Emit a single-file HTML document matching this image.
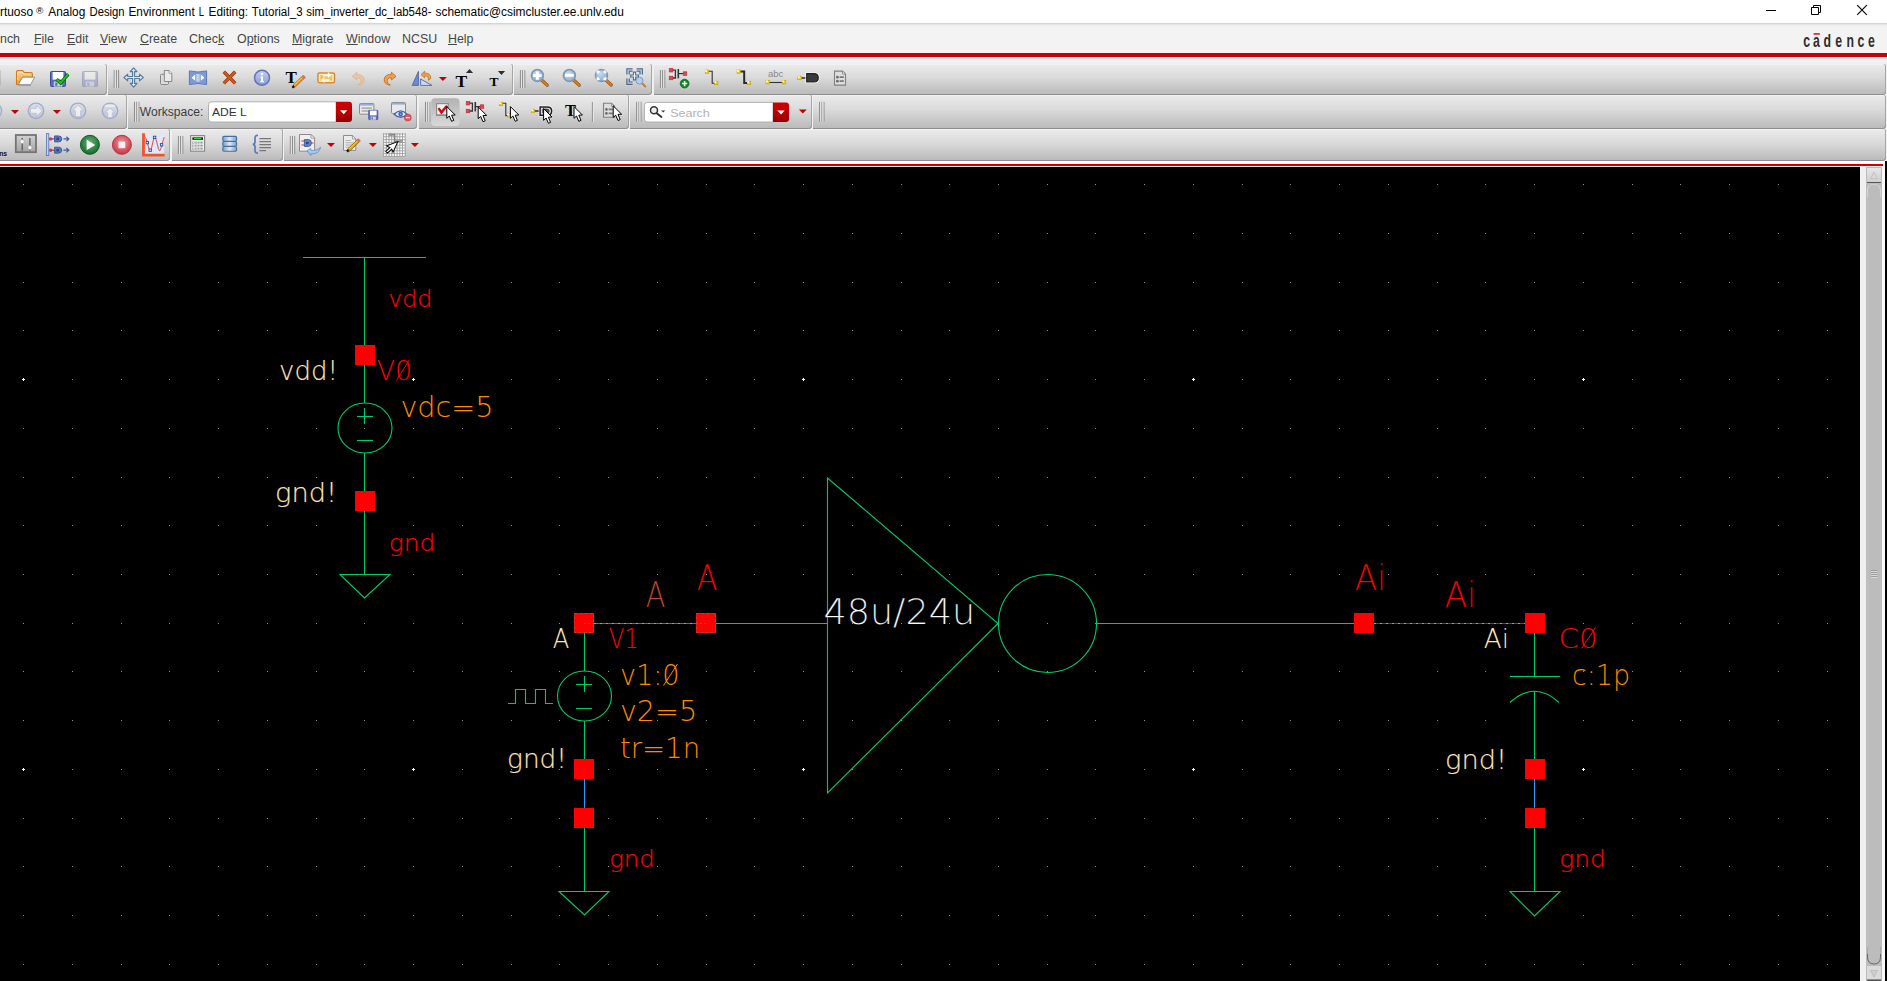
<!DOCTYPE html><html><head><meta charset="utf-8"><title>Virtuoso Analog Design Environment L Editing</title><style>
html,body{margin:0;padding:0}
body{width:1887px;height:981px;overflow:hidden;background:#f0f0f0;position:relative;font-family:"Liberation Sans",sans-serif;}
.abs{position:absolute}
#title{left:0;top:0;width:1887px;height:23px;background:#fff}
#menu{left:0;top:23px;width:1887px;height:30px;background:linear-gradient(#cdcdcd 0,#ececec 2px,#f3f3f3 4px,#f3f3f3 100%)}
#menu span{position:absolute;top:9px;font-size:12.4px;color:#464646;white-space:nowrap}
#menu u{text-decoration:underline;text-underline-offset:1px}
.red{background:#cc0000}
.tb{position:absolute;background:linear-gradient(#ebebeb,#dcdcdc 40%,#b9b9b9);border-radius:0 2px 4px 0;box-shadow:inset 0 -1px 0 #8e8e8e, inset -1px 0 0 #a6a6a6, inset 0 1px 0 #f2f2f2}
</style></head><body>
<div id="title" class="abs"></div>
<svg class="abs" style="left:0;top:0" width="700" height="23" font-family="'Liberation Sans',sans-serif" fill="#000">
<text x="0" y="16" font-size="12" textLength="33" lengthAdjust="spacingAndGlyphs">rtuoso</text>
<text x="36" y="14" font-size="9.5" textLength="7.4" lengthAdjust="spacingAndGlyphs">®</text>
<text x="48.3" y="16" font-size="12" textLength="37" lengthAdjust="spacingAndGlyphs">Analog</text>
<text x="89.5" y="16" font-size="12" textLength="35.1" lengthAdjust="spacingAndGlyphs">Design</text>
<text x="128.5" y="16" font-size="12" textLength="66.2" lengthAdjust="spacingAndGlyphs">Environment</text>
<text x="198.7" y="16" font-size="12" textLength="5.3" lengthAdjust="spacingAndGlyphs">L</text>
<text x="208.6" y="16" font-size="12" textLength="39.4" lengthAdjust="spacingAndGlyphs">Editing:</text>
<text x="251.8" y="16" font-size="12" textLength="50.9" lengthAdjust="spacingAndGlyphs">Tutorial_3</text>
<text x="306.3" y="16" font-size="12" textLength="125.2" lengthAdjust="spacingAndGlyphs">sim_inverter_dc_lab548-</text>
<text x="435.5" y="16" font-size="12" textLength="188.3" lengthAdjust="spacingAndGlyphs">schematic@csimcluster.ee.unlv.edu</text>
</svg>
<svg class="abs" style="left:1750px;top:0" width="137" height="23" viewBox="1750 0 137 23" fill="none" stroke="#000" stroke-width="1"><path d="M1766 10.5H1776"/><path d="M1811.5 7.5H1818.5V14.5H1811.5Z"/><path d="M1813.5 7.5V5.5H1820.5V12.5H1818.5"/><path d="M1857.2 5.2L1866.8 14.8M1866.8 5.2L1857.2 14.8" stroke-width="1.1"/></svg>
<div id="menu" class="abs">
<span style="left:0px">nch</span>
<span style="left:34px"><u>F</u>ile</span>
<span style="left:67px"><u>E</u>dit</span>
<span style="left:100px"><u>V</u>iew</span>
<span style="left:140px"><u>C</u>reate</span>
<span style="left:189px">Chec<u>k</u></span>
<span style="left:237px">O<u>p</u>tions</span>
<span style="left:292px"><u>M</u>igrate</span>
<span style="left:346px"><u>W</u>indow</span>
<span style="left:402px">NCSU</span>
<span style="left:448px"><u>H</u>elp</span>
</div>
<div class="abs red" style="left:0;top:53px;width:1887px;height:4px"></div>
<div class="tb" style="left:-5px;top:64px;width:111.5px;height:31px"></div>
<div class="tb" style="left:108px;top:64px;width:404.5px;height:31px"></div>
<div class="tb" style="left:514px;top:64px;width:138.3px;height:31px"></div>
<div class="tb" style="left:653.8px;top:64px;width:1232.7px;height:31px"></div>
<div class="tb" style="left:-5px;top:95px;width:131.8px;height:34px"></div>
<div class="tb" style="left:128.2px;top:95px;width:289px;height:34px"></div>
<div class="tb" style="left:418.7px;top:95px;width:209.9px;height:34px"></div>
<div class="tb" style="left:630.1px;top:95px;width:181.5px;height:34px"></div>
<div class="tb" style="left:813.1px;top:95px;width:1073.4px;height:34px"></div>
<div class="tb" style="left:-5px;top:129px;width:175.3px;height:32px"></div>
<div class="tb" style="left:171.8px;top:129px;width:111px;height:32px"></div>
<div class="tb" style="left:284.3px;top:129px;width:1602.2px;height:32px"></div>
<svg class="abs" style="left:0;top:0" width="1887" height="166" viewBox="0 0 1887 166" font-family="'Liberation Sans',sans-serif">
<defs>
<linearGradient id="gInfo" x1="0" y1="0" x2="0" y2="1"><stop offset="0" stop-color="#c3cdf0"/><stop offset="1" stop-color="#8a9dd6"/></linearGradient>
<radialGradient id="gLens" cx=".4" cy=".35" r=".7"><stop offset="0" stop-color="#c9dcf0"/><stop offset="1" stop-color="#86a9d4"/></radialGradient>
<linearGradient id="gDisc" x1="0" y1="0" x2="0" y2="1"><stop offset="0" stop-color="#dcdfea"/><stop offset="1" stop-color="#bfc5d6"/></linearGradient>
<radialGradient id="gPlay" cx=".5" cy=".4" r=".6"><stop offset="0" stop-color="#6fae7c"/><stop offset="1" stop-color="#0f6b27"/></radialGradient>
<radialGradient id="gStop" cx=".5" cy=".4" r=".6"><stop offset="0" stop-color="#ef9aa0"/><stop offset="1" stop-color="#c53442"/></radialGradient>
<linearGradient id="gDb" x1="0" y1="0" x2="1" y2="0"><stop offset="0" stop-color="#7f9cc6"/><stop offset=".5" stop-color="#dfe9f4"/><stop offset="1" stop-color="#7f9cc6"/></linearGradient>
<linearGradient id="gRedBtn" x1="0" y1="0" x2="0" y2="1"><stop offset="0" stop-color="#d00000"/><stop offset=".5" stop-color="#bb0000"/><stop offset="1" stop-color="#8e0000"/></linearGradient>
<linearGradient id="gSl" x1="0" y1="0" x2="0" y2="1"><stop offset="0" stop-color="#d2d2d2"/><stop offset="1" stop-color="#a4a4a4"/></linearGradient>
<linearGradient id="gPress" x1="0" y1="0" x2="0" y2="1"><stop offset="0" stop-color="#b2b2b2"/><stop offset="1" stop-color="#d9d9d9"/></linearGradient>
<g id="cur"><path d="M0 0V11.7L2.5 9.4L4.8 14.7L7 13.8L4.8 8.6L8.4 8.4Z" fill="#fff" stroke="#000" stroke-width="1" stroke-linejoin="miter"/></g>
<g id="dd"><path d="M-4 -2H4L0 2Z" fill="#c20000"/></g>
<g id="hd"><path d="M-2 0V18M0.2 0V18M2.4 0V18" stroke="#8b8b8b" stroke-width="1" fill="none"/><path d="M-0.9 0V18M1.3 0V18" stroke="#e6e6e6" stroke-width="1" fill="none"/></g><g id="hd2"><path d="M-2 0V20M0.2 0V20M2.4 0V20" stroke="#8b8b8b" stroke-width="1" fill="none"/><path d="M-0.9 0V20M1.3 0V20" stroke="#e6e6e6" stroke-width="1" fill="none"/></g>
<g id="ysq"><rect x="-1.8" y="-1.8" width="3.6" height="3.6" fill="#f0cf18" stroke="#b89a08" stroke-width=".5"/><rect x="-1.8" y="-1.8" width="1.9" height="1.9" fill="#fffbd0"/></g>
<g id="rsq"><rect x="-1.8" y="-1.8" width="3.6" height="3.6" fill="#dd4656" stroke="#bb2838" stroke-width=".6"/></g>
<g id="flop"><rect x=".5" y=".5" width="15" height="15" rx="1" fill="#5a6cc0" stroke="#3d4c94"/><rect x="2.6" y="1" width="10.8" height="7.6" fill="#fff"/><rect x="3.8" y="10.6" width="8.4" height="5" fill="#cdd2ec"/><rect x="5.2" y="11.6" width="2.2" height="3.2" fill="#5a6cc0"/></g>
<g id="mag"><path d="M4.2 4.4L9.8 9.6" stroke="#8a4a12" stroke-width="3.2" stroke-linecap="round"/><path d="M4.2 4.4L9.8 9.6" stroke="#e07a22" stroke-width="2" stroke-linecap="round"/><circle cx="0" cy="0" r="6" fill="url(#gLens)" stroke="#7a96b8" stroke-width="1.5"/></g>
<g id="doc"><path d="M.5 .5H8.5L11.5 3.5V14.5H.5Z" fill="#dedede" stroke="#808080" stroke-width="1.1"/><path d="M8.5 .5V3.5H11.5Z" fill="#fff" stroke="#808080" stroke-width=".8"/><circle cx="3.4" cy="6.6" r="1.35" fill="#6a6a6a"/><circle cx="3.4" cy="10.6" r="1.35" fill="#6a6a6a"/><path d="M5.6 6.6H9.8M5.6 10.6H9.8" stroke="#7a7a7a" stroke-width="1.7"/></g>
<g id="inst"><path d="M2 2H6.4V9.8H2M6.4 5.6" stroke="#333" stroke-width="1.3" fill="none"/><path d="M9.3 .8V10.2" stroke="#333" stroke-width="1.6"/><path d="M9.3 5.4H16" stroke="#333" stroke-width="1.2"/><use href="#rsq" x="2" y="2"/><use href="#rsq" x="2" y="9.8"/><use href="#rsq" x="16" y="5.4"/></g>
<g id="pinsh"><path d="M.7 .7H8Q12.3 .7 12.3 4.8Q12.3 9 8 9H.7Z" fill="#3a3a3a" stroke="#fff" stroke-width="2.6"/><path d="M.7 .7H8Q12.3 .7 12.3 4.8Q12.3 9 8 9H.7Z" fill="#3a3a3a" stroke="#222" stroke-width="1.2"/></g>
<g id="pinsh2"><path d="M.7 .7H8Q12.3 .7 12.3 4.8Q12.3 9 8 9H.7Z" fill="#e4e4e4" stroke="#fff" stroke-width="2.8"/><path d="M.7 .7H8Q12.3 .7 12.3 4.8Q12.3 9 8 9H.7Z" fill="#dcdcdc" stroke="#222" stroke-width="1.5"/><path d="M3.4 2.9H7.6Q9.8 2.9 9.8 4.8Q9.8 6.8 7.6 6.8H3.4Z" fill="#555" stroke="#333" stroke-width=".8"/></g>
<linearGradient id="gFold" x1="0" y1="0" x2="0" y2="1"><stop offset="0" stop-color="#fbd795"/><stop offset="1" stop-color="#f09a2c"/></linearGradient>
</defs>
<rect x="-1" y="70" width="1.5" height="15" fill="#8a8a8a" opacity=".6"/>
<path d="M16.5 84.5V72Q16.5 70.6 18 70.6H22.6L24.4 72.6H31Q32.4 72.6 32.4 74V77.2H22.6L18.4 84.5Z" fill="url(#gFold)" stroke="#d8781a" stroke-width="1.1"/><path d="M17.8 80V72.6Q17.8 71.9 18.6 71.9H22L23.8 73.9H30.6" fill="none" stroke="#fff3d8" stroke-width=".8" opacity=".9"/>
<path d="M18.3 84.6L22.6 77.2H34.8L30.6 84.6Z" fill="#fafafa" stroke="#8592a2" stroke-width=".9"/>
<path d="M18 85.6H31" stroke="#777" stroke-width="1" opacity=".5"/>
<use href="#flop" x="50" y="71"/>
<path d="M56.6 79.2L60.7 83L68.2 74.2" fill="none" stroke="#0a5a0a" stroke-width="3.4" stroke-linejoin="miter"/>
<path d="M56.6 79.2L60.7 83L68.2 74.2" fill="none" stroke="#14c814" stroke-width="2" stroke-linejoin="miter"/>
<use href="#flop" x="82" y="71" opacity=".33"/>
<use href="#hd" x="116.2" y="70"/>
<path d="M133.6 67.8L137 71.6H134.6V76.5H139.5V74.1L143.3 77.5L139.5 80.9V78.5H134.6V83.4H137L133.6 87.2L130.2 83.4H132.6V78.5H127.7V80.9L123.9 77.5L127.7 74.1V76.5H132.6V71.6H130.2Z" fill="#dce6f2" stroke="#527aa2" stroke-width="1.1" stroke-linejoin="round"/>
<rect x="160.5" y="74.3" width="8" height="10.2" rx="1" fill="#dcdcdc" stroke="#868686"/>
<path d="M164.3 70.5H169L171.8 73.3V81.5H164.3Z" fill="#e9e9e9" stroke="#868686"/><path d="M169 70.5V73.3H171.8" fill="#fff" stroke="#868686" stroke-width=".8"/>
<path d="M189.4 70.9Q198 73.2 206.6 70.9V84.6Q198 82.4 189.4 84.6Z" fill="#7b9ad6" stroke="#5b79b6" stroke-width="1"/>
<path d="M191.6 77.7L195.2 74.6V80.8ZM204.4 77.7L200.8 74.6V80.8Z" fill="#fff"/><rect x="196.6" y="74" width="2.8" height="7.6" fill="#fff"/><rect x="197.6" y="74" width=".9" height="7.6" fill="#7b9ad6"/>
<path d="M223.8 71.8L235.2 83.4M235.2 71.8L223.8 83.4" stroke="#8a3208" stroke-width="3.4" stroke-linecap="butt"/>
<path d="M223.8 71.8L235.2 83.4M235.2 71.8L223.8 83.4" stroke="#d2581a" stroke-width="2.2" stroke-linecap="butt"/>
<circle cx="262" cy="77.8" r="7.5" fill="url(#gInfo)" stroke="#5874b6" stroke-width="1.4"/>
<circle cx="262" cy="74.1" r="1.3" fill="#fff"/><path d="M260.4 76.6H263V81H264V82.2H260.2V81H261.1V77.8H260.4Z" fill="#fff"/>
<text x="285.5" y="83" font-family="'Liberation Serif',serif" font-weight="700" font-size="17" fill="#000">T</text>
<path d="M293.6 86.6L304.4 76.2" stroke="#7a5a10" stroke-width="3.4"/><path d="M293.6 86.6L304.4 76.2" stroke="#f6d21e" stroke-width="2.2"/><path d="M302.6 77.9L304.6 76" stroke="#e07070" stroke-width="3"/><path d="M292.4 87.7L294.3 85.9" stroke="#111" stroke-width="2.2"/><path d="M294 86.8L303.6 77.6" stroke="#e8552a" stroke-width=".7"/>
<rect x="317.9" y="72.9" width="16.6" height="9.8" rx="1.6" fill="#fdf0c8" stroke="#e08434" stroke-width="1.5"/><rect x="320.2" y="75" width="12" height="5.6" fill="#f2c254"/>
<path d="M323 74.6H328V72.2L331.4 75.2L328 78V76.2H323ZM329.4 79.2H324.4V77L321 80L324.4 83V80.8H329.4Z" fill="#fff" stroke="#f0e0b0" stroke-width=".4"/>
<path d="M356.8 72.2L352.2 76.4L356.8 80V77.8Q361.6 77.6 361 81.6Q360.6 83.8 357.8 85.2Q364.4 84.4 364 79.2Q363.4 74.4 356.8 74.4Z" fill="#eec39c" stroke="#dcae88" stroke-width=".8" opacity=".9"/>
<g transform="translate(748.2 0) scale(-1 1)"><path d="M356.8 72.2L352.2 76.4L356.8 80V77.8Q361.6 77.6 361 81.6Q360.6 83.8 357.8 85.2Q364.4 84.4 364 79.2Q363.4 74.4 356.8 74.4Z" fill="#f0a04a" stroke="#c46e1c" stroke-width=".9"/></g>
<path d="M418.4 71.4V85.4H412.2Z" fill="#6d89cb" stroke="#4d68ac" stroke-width=".9"/><path d="M420.6 79L432 85.4H420.6Z" fill="#cdd8f2" stroke="#4d68ac" stroke-width=".9"/>
<path d="M421 74.6L424.6 71.2V73.2Q430.6 72.6 430.8 78.4L428.4 80.4Q429 75.6 424.6 75.8V77.8Z" fill="#f0a04a" stroke="#c46e1c" stroke-width=".8"/>
<use href="#dd" x="442.9" y="78.9"/>
<text x="455.4" y="87" font-family="'Liberation Serif',serif" font-weight="700" font-size="17.5" fill="#000">T</text><path d="M465.9 73H473.1L469.5 68.9Z" fill="#2e2e2e"/>
<text x="489.6" y="85.9" font-family="'Liberation Serif',serif" font-weight="700" font-size="13.5" fill="#000">T</text><path d="M497.9 71H505.1L501.5 75.1Z" fill="#2e2e2e"/>
<use href="#hd" x="522.4" y="70"/>
<use href="#mag" x="537.4" y="75.6"/><path d="M533.2 75.6H541.6M537.4 71.4V79.8" stroke="#fff" stroke-width="2.9"/>
<use href="#mag" x="569.4" y="75.6"/><path d="M565 75.3H573.8" stroke="#fff" stroke-width="3"/>
<use href="#mag" x="601.5" y="75.4"/><path d="M597.6 73.6V71.6H599.6M603.4 71.6H605.4V73.6M605.4 77.2V79.2H603.4M599.6 79.2H597.6V77.2" stroke="#fff" stroke-width="2" fill="#fff"/>
<path d="M626.9 74.4V68.8H632.6M636.6 68.8H642.3V74.4M626.9 78.6V84.3H632.6" stroke="#44688f" stroke-width="1.2" fill="none"/>
<path d="M629.2 74.4V71.1H632.6M636.6 71.1H640V74.4M629.2 78.6V82H632.6" stroke="#44688f" stroke-width="1.2" fill="none"/>
<path d="M634.5 71.6V80.4M630.1 76H638.9" stroke="#44688f" stroke-width="3.2"/><path d="M634.5 72.7V79.3M631.2 76H637.8" stroke="#f2f6fb" stroke-width="1.2"/>
<path d="M641.8 83L645.4 86.6" stroke="#d2741e" stroke-width="1.8" stroke-linecap="round"/><circle cx="639.5" cy="80.7" r="3.5" fill="#b5cdea" stroke="#7a9cc6" stroke-width="1"/>
<use href="#hd" x="662.4" y="70"/>
<use href="#inst" x="669" y="68.2"/>
<circle cx="684.6" cy="83.6" r="4.4" fill="#0c8a1c" stroke="#0a6a14" stroke-width=".8"/><path d="M682 83.6H687.2M684.6 81V86.2" stroke="#fff" stroke-width="1.5"/>
<path d="M708 71.2H712.2V83.2H715.6" stroke="#333" stroke-width="1.1" fill="none"/><use href="#ysq" x="707" y="71.8"/><use href="#ysq" x="716.2" y="83"/>
<path d="M740 71.6H744.2V83.1H747.6" stroke="#2a2a2a" stroke-width="2" fill="none"/><use href="#ysq" x="738.8" y="71.8"/><use href="#ysq" x="749" y="83"/>
<text x="768" y="76.6" font-size="8.6" fill="#8a8a8a" font-family="'Liberation Sans',sans-serif" textLength="15.4" lengthAdjust="spacingAndGlyphs">abc</text>
<path d="M768 82.5H784" stroke="#333" stroke-width="1.1"/><use href="#ysq" x="767.8" y="82.2"/><use href="#ysq" x="784" y="82.2"/>
<path d="M800 78H806.4" stroke="#222" stroke-width="1.4"/><use href="#pinsh" x="806" y="73"/><use href="#ysq" x="799.6" y="78"/>
<use href="#doc" x="834" y="70.6"/>
<circle cx="-6" cy="110.8" r="7.6" fill="url(#gDisc)" stroke="#a3aecb" stroke-width="1.4"/>
<use href="#dd" x="15" y="112"/>
<circle cx="36" cy="110.8" r="7.7" fill="url(#gDisc)" stroke="#a0acca" stroke-width="1.4"/>
<path d="M30.4 108.3H36.4V105.3L42.2 110.8L36.4 116.3V113.3H30.4Z" fill="#eeeeee" stroke="#b4bbcf" stroke-width=".7"/>
<use href="#dd" x="56.9" y="112"/>
<circle cx="78" cy="110.8" r="7.7" fill="url(#gDisc)" stroke="#a0acca" stroke-width="1.4"/>
<path d="M75.4 116.6V110.8H72.6L78 104.8L83.4 110.8H80.6V116.6Z" fill="#eeeeee" stroke="#b4bbcf" stroke-width=".7"/>
<circle cx="110" cy="110.8" r="7.7" fill="url(#gDisc)" stroke="#a0acca" stroke-width="1.4"/>
<path d="M104.8 105.8H115.2" stroke="#ebebeb" stroke-width="2"/>
<path d="M107.7 117.4V112.8H105.2L110 108L114.8 112.8H112.3V117.4Z" fill="#eeeeee" stroke="#b4bbcf" stroke-width=".7"/>
<use href="#hd2" x="136.5" y="101.8"/>
<text x="139.8" y="116" font-size="12" fill="#3c3c3c" textLength="63.6" lengthAdjust="spacingAndGlyphs">Workspace:</text>
<path d="M211.5 101.8H336V122H211.5Q208.5 122 208.5 119V104.8Q208.5 101.8 211.5 101.8Z" fill="#fff" stroke="#a9a9a9" stroke-width=".9"/>
<path d="M336 101.8H349Q352 101.8 352 104.8V119Q352 122 349 122H336Z" fill="url(#gRedBtn)"/>
<path d="M340 110.2H347.4L343.7 114.2Z" fill="#fff"/>
<text x="212" y="116" font-size="11.8" fill="#333" textLength="34.8" lengthAdjust="spacingAndGlyphs">ADE L</text>
<rect x="359.5" y="103.6" width="14.4" height="10.6" rx=".8" fill="#e9e9e9" stroke="#8a8a8a"/><rect x="360" y="104" width="13.4" height="1.6" fill="#8fb0dc"/><path d="M361.6 108.1H371.8M361.6 111H371.8" stroke="#7a7a7a" stroke-width=".9"/>
<g transform="translate(368.3 110) scale(.62)"><use href="#flop"/></g>
<rect x="391.5" y="102.6" width="14" height="10.8" rx=".8" fill="#e9e9e9" stroke="#8a8a8a"/><rect x="392" y="103" width="13" height="1.6" fill="#8fb0dc"/>
<path d="M394.2 114.2Q400.6 107.6 407 114.2Q400.6 120.4 394.2 114.2Z" fill="#e8eefa" stroke="#3f62b0" stroke-width="1.4"/><circle cx="400.6" cy="114.1" r="2.4" fill="#3f62b0"/><circle cx="400.6" cy="114.1" r=".9" fill="#9fb4e0"/>
<circle cx="407.8" cy="117.6" r="3.5" fill="#e05560" stroke="#c83848" stroke-width=".6"/><path d="M405.8 117.6H409.8" stroke="#fff" stroke-width="1.3"/>
<use href="#hd2" x="427.5" y="101.8"/>
<rect x="431.2" y="98.2" width="28.4" height="27.8" rx="4" fill="url(#gPress)"/>
<rect x="436.6" y="103.6" width="11.6" height="11.6" fill="#f0f0f0" stroke="#8c8c8c" stroke-width="1.2"/><path d="M436 115.2H448.8" stroke="#8c8c8c" stroke-width="1.6"/>
<path d="M438.6 108.2L441.4 112.4L447 105.8" fill="none" stroke="#e00010" stroke-width="2.4"/>
<use href="#cur" x="446.8" y="106.6"/>
<use href="#inst" x="466" y="101.2"/><use href="#cur" x="478.2" y="107"/>
<path d="M502 103.2H505.8V115.6H508.6" stroke="#333" stroke-width="1.1" fill="none"/><use href="#ysq" x="501" y="104"/><use href="#ysq" x="509" y="115.2"/><use href="#cur" x="510.4" y="106.6"/>
<path d="M533.4 111H539.6" stroke="#222" stroke-width="1.4"/><use href="#pinsh2" x="539.4" y="106.2"/><use href="#ysq" x="533" y="111"/><use href="#cur" x="543.6" y="108.6"/>
<text x="565" y="116" font-family="'Liberation Serif',serif" font-weight="700" font-size="16.5" fill="#000">T</text><use href="#cur" x="574" y="106.6"/>
<path d="M592.4 102V122" stroke="#8b8b8b" stroke-width="1"/><path d="M593.4 102V122" stroke="#e6e6e6" stroke-width="1"/>
<use href="#doc" x="603" y="102.8"/><use href="#cur" x="613.2" y="105.8"/>
<use href="#hd2" x="638.6" y="101.8"/>
<path d="M647.4 102.4H773V122H647.4Q644.4 122 644.4 119V105.4Q644.4 102.4 647.4 102.4Z" fill="#fff" stroke="#a9a9a9" stroke-width=".9"/>
<path d="M773 102.4H786Q789 102.4 789 105.4V119Q789 122 786 122H773Z" fill="url(#gRedBtn)"/><path d="M777.3 110.4H784.7L781 114.4Z" fill="#fff"/>
<circle cx="654" cy="110.3" r="3.5" fill="#eee" stroke="#333" stroke-width="1.5"/><path d="M656.8 113.2L661.4 117" stroke="#333" stroke-width="1.9" stroke-linecap="round"/><path d="M661.2 110.4H665.2L663.2 112.6Z" fill="#333"/>
<text x="670.2" y="116.6" font-size="11.6" fill="#b2b2b2" textLength="39.6" lengthAdjust="spacingAndGlyphs">Search</text>
<use href="#dd" x="802.8" y="111.4"/>
<use href="#hd2" x="821.6" y="101.8"/>
<text x="-5" y="155.7" font-size="6.8" font-weight="700" fill="#111">ons</text>
<rect x="15.8" y="135" width="20.2" height="17.2" fill="url(#gSl)" stroke="#747474" stroke-width="1.8"/>
<path d="M22.2 138V150.6M29.9 138V150.6" stroke="#4a4a4a" stroke-width="1.1"/><circle cx="22.2" cy="141.6" r="2.1" fill="#f4f4f4" stroke="#999" stroke-width=".5"/><circle cx="29.9" cy="147.6" r="2.1" fill="#f4f4f4" stroke="#999" stroke-width=".5"/>
<rect x="46.4" y="133.6" width="2.4" height="22" fill="#c6d2ee" stroke="#5672b4" stroke-width=".8"/>
<path d="M50 138.9 H56" stroke="#4a5e98" stroke-width="1.2"/><circle cx="50.6" cy="138.9" r="1.7" fill="#e23048"/>
<path d="M54.6 135.9 H58.4Q61.8 135.9 61.8 138.9 Q61.8 141.9 58.4 141.9 H54.6Z" fill="#5f78b8" stroke="#3f5490" stroke-width=".9"/>
<rect x="56.4" y="137.7" width="2.6" height="2.4" fill="#2f4484"/>
<path d="M63.4 138.9 H68.2M66.4 136.7 L68.8 138.9 L66.4 141.1" stroke="#3f5ca0" stroke-width="1.2" fill="none"/>
<path d="M50 150.2 H56" stroke="#4a5e98" stroke-width="1.2"/><circle cx="50.6" cy="150.2" r="1.7" fill="#e23048"/>
<path d="M54.6 147.2 H58.4Q61.8 147.2 61.8 150.2 Q61.8 153.2 58.4 153.2 H54.6Z" fill="#5f78b8" stroke="#3f5490" stroke-width=".9"/>
<rect x="56.4" y="149" width="2.6" height="2.4" fill="#2f4484"/>
<path d="M63.4 150.2 H68.2M66.4 148 L68.8 150.2 L66.4 152.4" stroke="#3f5ca0" stroke-width="1.2" fill="none"/>
<circle cx="89.9" cy="144.8" r="9.5" fill="url(#gPlay)" stroke="#0b5e20" stroke-width="1"/><path d="M86.6 139.6L95.2 144.9L86.6 150.2Z" fill="#f2f8f2"/>
<circle cx="121.9" cy="144.8" r="9.5" fill="url(#gStop)" stroke="#c03040" stroke-width="1"/><rect x="118.5" y="141.6" width="6.8" height="6.6" fill="#fbeeee"/>
<rect x="143.6" y="134.6" width="20.6" height="19.6" fill="#e0e7f6"/><path d="M143.5 133.2V155.2H164.6" stroke="#f0532e" stroke-width="2.8" fill="none"/>
<path d="M145.2 137.4C147.4 139 148.4 150.4 150.2 150.4S153 137.2 154.8 137.2S157.8 150.6 159.6 150.6S162.4 140 164.4 137.2" stroke="#e05858" stroke-width="1.1" fill="none"/>
<rect x="146.1" y="141.4" width="2.4" height="2.4" fill="#dfe6f6" stroke="#2c4a94" stroke-width=".9"/>
<rect x="149" y="149" width="2.4" height="2.4" fill="#dfe6f6" stroke="#2c4a94" stroke-width=".9"/>
<rect x="153.4" y="136.2" width="2.4" height="2.4" fill="#dfe6f6" stroke="#2c4a94" stroke-width=".9"/>
<rect x="160.4" y="143.6" width="2.4" height="2.4" fill="#dfe6f6" stroke="#2c4a94" stroke-width=".9"/>
<use href="#hd" x="180.4" y="136"/>
<rect x="190.6" y="135.6" width="14" height="15.6" fill="#ececec" stroke="#868686" stroke-width="1.1"/><rect x="192.4" y="137.4" width="10.6" height="2.4" fill="#111"/><rect x="194" y="138" width="7.4" height="1.1" fill="#38d838"/>
<rect x="192.5" y="142" width="1.7" height="1.6" fill="#fff" stroke="#8a8a8a" stroke-width=".5"/>
<rect x="195.25" y="142" width="1.7" height="1.6" fill="#fff" stroke="#8a8a8a" stroke-width=".5"/>
<rect x="198" y="142" width="1.7" height="1.6" fill="#fff" stroke="#8a8a8a" stroke-width=".5"/>
<rect x="200.75" y="142" width="1.7" height="1.6" fill="#fff" stroke="#8a8a8a" stroke-width=".5"/>
<rect x="192.5" y="145" width="1.7" height="1.6" fill="#fff" stroke="#8a8a8a" stroke-width=".5"/>
<rect x="195.25" y="145" width="1.7" height="1.6" fill="#fff" stroke="#8a8a8a" stroke-width=".5"/>
<rect x="198" y="145" width="1.7" height="1.6" fill="#fff" stroke="#8a8a8a" stroke-width=".5"/>
<rect x="200.75" y="145" width="1.7" height="1.6" fill="#fff" stroke="#8a8a8a" stroke-width=".5"/>
<rect x="192.5" y="148" width="1.7" height="1.6" fill="#fff" stroke="#8a8a8a" stroke-width=".5"/>
<rect x="195.25" y="148" width="1.7" height="1.6" fill="#fff" stroke="#8a8a8a" stroke-width=".5"/>
<rect x="198" y="148" width="1.7" height="1.6" fill="#fff" stroke="#8a8a8a" stroke-width=".5"/>
<rect x="200.75" y="148" width="1.7" height="1.6" fill="#fff" stroke="#8a8a8a" stroke-width=".5"/>
<rect x="222.8" y="136.4" width="13.8" height="4.8" rx="1.2" fill="url(#gDb)" stroke="#45709f" stroke-width="1.1"/>
<rect x="222.8" y="141.45" width="13.8" height="4.8" rx="1.2" fill="url(#gDb)" stroke="#45709f" stroke-width="1.1"/>
<rect x="222.8" y="146.5" width="13.8" height="4.8" rx="1.2" fill="url(#gDb)" stroke="#45709f" stroke-width="1.1"/>
<path d="M258 135.4Q255 135.2 255 138V142Q255 144.2 252.8 144.3Q255 144.4 255 146.6V150.6Q255 153.4 258 153.2" stroke="#5878c4" stroke-width="1.7" fill="none"/>
<path d="M259.4 138.6H271M259.4 141.6H271M259.4 144.6H271M259.4 147.6H271M259.4 150.6H266" stroke="#777" stroke-width="1.3"/>
<use href="#hd" x="292.3" y="136"/>
<path d="M299.5 134.5H311L314.6 138.1V151.2H299.5Z" fill="#efefef" stroke="#8c8c8c"/><path d="M311 134.5V138.1H314.6Z" fill="#fff" stroke="#8c8c8c" stroke-width=".8"/>
<path d="M301.4 141H305M301.4 145H305M311 143H313.6" stroke="#e03040" stroke-width="1.2"/><path d="M304.4 139.6H308.4Q311.4 139.6 311.4 143Q311.4 146.4 308.4 146.4H304.4Z" fill="#6a84c4" stroke="#3f5896" stroke-width=".9"/><rect x="306" y="141.8" width="2.6" height="2.4" fill="#2f4484"/>
<path d="M307 150.8L310.8 148.4V150.2Q317 151.2 320.6 147.2Q319 154.6 310.8 153.8V155.4Z" fill="#a8c8ec" stroke="#5a8ccc" stroke-width=".8"/>
<use href="#dd" x="331" y="144.9"/>
<path d="M343.5 135.5H352.4L355.8 138.9V150.4H343.5Z" fill="#ececec" stroke="#8c8c8c"/><path d="M352.4 135.5V138.9H355.8Z" fill="#fff" stroke="#8c8c8c" stroke-width=".8"/><path d="M345.6 140.6H351M345.6 142.8H353.6M345.6 145H353.6M345.6 147.2H352" stroke="#a0a0a0" stroke-width=".8"/>
<path d="M348.2 150.4L359.4 139.8" stroke="#7a5a10" stroke-width="3.4"/><path d="M348.2 150.4L359.4 139.8" stroke="#f6d21e" stroke-width="2.2"/><path d="M357.8 141.4L359.6 139.6" stroke="#e07070" stroke-width="3"/><path d="M347 151.6L348.8 149.8" stroke="#111" stroke-width="2.2"/><path d="M348.6 150.6L358.6 141.2" stroke="#e8552a" stroke-width=".7"/>
<use href="#dd" x="372.9" y="144.9"/>
<rect x="383" y="133.2" width="21.8" height="23.2" fill="#fff"/>
<path d="M383.6 133.2V156.4M386.3 133.2V156.4M389 133.2V156.4M391.7 133.2V156.4M394.4 133.2V156.4M397.1 133.2V156.4M399.8 133.2V156.4M402.5 133.2V156.4M405.2 133.2V156.4M383 134H404.8M383 136.8H404.8M383 139.6H404.8M383 142.4H404.8M383 145.2H404.8M383 148H404.8M383 150.8H404.8M383 153.6H404.8M383 156.4H404.8" stroke="#9c9c9c" stroke-width=".9" fill="none"/>
<path d="M389.6 134.6H394.6V141.4H402" stroke="#808080" stroke-width="1.6" fill="none"/><rect x="388.4" y="133.4" width="2.6" height="2.6" fill="#999"/><rect x="400" y="140" width="2.8" height="2.8" fill="#999"/>
<g transform="translate(397.8 141.6) rotate(24) scale(-1 1)"><use href="#cur"/></g>
<use href="#dd" x="414.9" y="144.9"/>
</svg>
<div class="abs" style="left:0;top:161px;width:1885px;height:3px;background:#fff"></div>
<div class="abs" style="left:1885px;top:161px;width:2px;height:820px;background:#000"></div>
<div class="abs" style="left:1882px;top:164px;width:3px;height:817px;background:#fafafa"></div>
<div class="abs red" style="left:0;top:164px;width:1883px;height:2px"></div>
<svg class="abs" style="left:0;top:0" width="1860" height="981" viewBox="0 0 1860 981"><rect x="0" y="167" width="1860" height="814" fill="#000"/>
<path d="M23 184.5h1M23 233.5h1M23 282.5h1M23 330.5h1M23 428.5h1M23 477.5h1M23 525.5h1M23 574.5h1M23 623.5h1M23 671.5h1M23 720.5h1M23 818.5h1M23 866.5h1M23 915.5h1M23 964.5h1M72 184.5h1M72 233.5h1M72 282.5h1M72 330.5h1M72 379.5h1M72 428.5h1M72 477.5h1M72 525.5h1M72 574.5h1M72 623.5h1M72 671.5h1M72 720.5h1M72 769.5h1M72 818.5h1M72 866.5h1M72 915.5h1M72 964.5h1M121 184.5h1M121 233.5h1M121 282.5h1M121 330.5h1M121 379.5h1M121 428.5h1M121 477.5h1M121 525.5h1M121 574.5h1M121 623.5h1M121 671.5h1M121 720.5h1M121 769.5h1M121 818.5h1M121 866.5h1M121 915.5h1M121 964.5h1M169 184.5h1M169 233.5h1M169 282.5h1M169 330.5h1M169 379.5h1M169 428.5h1M169 477.5h1M169 525.5h1M169 574.5h1M169 623.5h1M169 671.5h1M169 720.5h1M169 769.5h1M169 818.5h1M169 866.5h1M169 915.5h1M169 964.5h1M218 184.5h1M218 233.5h1M218 282.5h1M218 330.5h1M218 379.5h1M218 428.5h1M218 477.5h1M218 525.5h1M218 574.5h1M218 623.5h1M218 671.5h1M218 720.5h1M218 769.5h1M218 818.5h1M218 866.5h1M218 915.5h1M218 964.5h1M267 184.5h1M267 233.5h1M267 282.5h1M267 330.5h1M267 379.5h1M267 428.5h1M267 477.5h1M267 525.5h1M267 574.5h1M267 623.5h1M267 671.5h1M267 720.5h1M267 769.5h1M267 818.5h1M267 866.5h1M267 915.5h1M267 964.5h1M316 184.5h1M316 233.5h1M316 282.5h1M316 330.5h1M316 379.5h1M316 428.5h1M316 477.5h1M316 525.5h1M316 574.5h1M316 623.5h1M316 671.5h1M316 720.5h1M316 769.5h1M316 818.5h1M316 866.5h1M316 915.5h1M316 964.5h1M364 184.5h1M364 233.5h1M364 282.5h1M364 330.5h1M364 379.5h1M364 428.5h1M364 477.5h1M364 525.5h1M364 574.5h1M364 623.5h1M364 671.5h1M364 720.5h1M364 769.5h1M364 818.5h1M364 866.5h1M364 915.5h1M364 964.5h1M413 184.5h1M413 233.5h1M413 282.5h1M413 330.5h1M413 428.5h1M413 477.5h1M413 525.5h1M413 574.5h1M413 623.5h1M413 671.5h1M413 720.5h1M413 818.5h1M413 866.5h1M413 915.5h1M413 964.5h1M462 184.5h1M462 233.5h1M462 282.5h1M462 330.5h1M462 379.5h1M462 428.5h1M462 477.5h1M462 525.5h1M462 574.5h1M462 623.5h1M462 671.5h1M462 720.5h1M462 769.5h1M462 818.5h1M462 866.5h1M462 915.5h1M462 964.5h1M511 184.5h1M511 233.5h1M511 282.5h1M511 330.5h1M511 379.5h1M511 428.5h1M511 477.5h1M511 525.5h1M511 574.5h1M511 623.5h1M511 671.5h1M511 720.5h1M511 769.5h1M511 818.5h1M511 866.5h1M511 915.5h1M511 964.5h1M559 184.5h1M559 233.5h1M559 282.5h1M559 330.5h1M559 379.5h1M559 428.5h1M559 477.5h1M559 525.5h1M559 574.5h1M559 623.5h1M559 671.5h1M559 720.5h1M559 769.5h1M559 818.5h1M559 866.5h1M559 915.5h1M559 964.5h1M608 184.5h1M608 233.5h1M608 282.5h1M608 330.5h1M608 379.5h1M608 428.5h1M608 477.5h1M608 525.5h1M608 574.5h1M608 623.5h1M608 671.5h1M608 720.5h1M608 769.5h1M608 818.5h1M608 866.5h1M608 915.5h1M608 964.5h1M657 184.5h1M657 233.5h1M657 282.5h1M657 330.5h1M657 379.5h1M657 428.5h1M657 477.5h1M657 525.5h1M657 574.5h1M657 623.5h1M657 671.5h1M657 720.5h1M657 769.5h1M657 818.5h1M657 866.5h1M657 915.5h1M657 964.5h1M706 184.5h1M706 233.5h1M706 282.5h1M706 330.5h1M706 379.5h1M706 428.5h1M706 477.5h1M706 525.5h1M706 574.5h1M706 623.5h1M706 671.5h1M706 720.5h1M706 769.5h1M706 818.5h1M706 866.5h1M706 915.5h1M706 964.5h1M754 184.5h1M754 233.5h1M754 282.5h1M754 330.5h1M754 379.5h1M754 428.5h1M754 477.5h1M754 525.5h1M754 574.5h1M754 623.5h1M754 671.5h1M754 720.5h1M754 769.5h1M754 818.5h1M754 866.5h1M754 915.5h1M754 964.5h1M803 184.5h1M803 233.5h1M803 282.5h1M803 330.5h1M803 428.5h1M803 477.5h1M803 525.5h1M803 574.5h1M803 623.5h1M803 671.5h1M803 720.5h1M803 818.5h1M803 866.5h1M803 915.5h1M803 964.5h1M852 184.5h1M852 233.5h1M852 282.5h1M852 330.5h1M852 379.5h1M852 428.5h1M852 477.5h1M852 525.5h1M852 574.5h1M852 623.5h1M852 671.5h1M852 720.5h1M852 769.5h1M852 818.5h1M852 866.5h1M852 915.5h1M852 964.5h1M901 184.5h1M901 233.5h1M901 282.5h1M901 330.5h1M901 379.5h1M901 428.5h1M901 477.5h1M901 525.5h1M901 574.5h1M901 623.5h1M901 671.5h1M901 720.5h1M901 769.5h1M901 818.5h1M901 866.5h1M901 915.5h1M901 964.5h1M949 184.5h1M949 233.5h1M949 282.5h1M949 330.5h1M949 379.5h1M949 428.5h1M949 477.5h1M949 525.5h1M949 574.5h1M949 623.5h1M949 671.5h1M949 720.5h1M949 769.5h1M949 818.5h1M949 866.5h1M949 915.5h1M949 964.5h1M998 184.5h1M998 233.5h1M998 282.5h1M998 330.5h1M998 379.5h1M998 428.5h1M998 477.5h1M998 525.5h1M998 574.5h1M998 623.5h1M998 671.5h1M998 720.5h1M998 769.5h1M998 818.5h1M998 866.5h1M998 915.5h1M998 964.5h1M1047 184.5h1M1047 233.5h1M1047 282.5h1M1047 330.5h1M1047 379.5h1M1047 428.5h1M1047 477.5h1M1047 525.5h1M1047 574.5h1M1047 623.5h1M1047 671.5h1M1047 720.5h1M1047 769.5h1M1047 818.5h1M1047 866.5h1M1047 915.5h1M1047 964.5h1M1095 184.5h1M1095 233.5h1M1095 282.5h1M1095 330.5h1M1095 379.5h1M1095 428.5h1M1095 477.5h1M1095 525.5h1M1095 574.5h1M1095 623.5h1M1095 671.5h1M1095 720.5h1M1095 769.5h1M1095 818.5h1M1095 866.5h1M1095 915.5h1M1095 964.5h1M1144 184.5h1M1144 233.5h1M1144 282.5h1M1144 330.5h1M1144 379.5h1M1144 428.5h1M1144 477.5h1M1144 525.5h1M1144 574.5h1M1144 623.5h1M1144 671.5h1M1144 720.5h1M1144 769.5h1M1144 818.5h1M1144 866.5h1M1144 915.5h1M1144 964.5h1M1193 184.5h1M1193 233.5h1M1193 282.5h1M1193 330.5h1M1193 428.5h1M1193 477.5h1M1193 525.5h1M1193 574.5h1M1193 623.5h1M1193 671.5h1M1193 720.5h1M1193 818.5h1M1193 866.5h1M1193 915.5h1M1193 964.5h1M1242 184.5h1M1242 233.5h1M1242 282.5h1M1242 330.5h1M1242 379.5h1M1242 428.5h1M1242 477.5h1M1242 525.5h1M1242 574.5h1M1242 623.5h1M1242 671.5h1M1242 720.5h1M1242 769.5h1M1242 818.5h1M1242 866.5h1M1242 915.5h1M1242 964.5h1M1290 184.5h1M1290 233.5h1M1290 282.5h1M1290 330.5h1M1290 379.5h1M1290 428.5h1M1290 477.5h1M1290 525.5h1M1290 574.5h1M1290 623.5h1M1290 671.5h1M1290 720.5h1M1290 769.5h1M1290 818.5h1M1290 866.5h1M1290 915.5h1M1290 964.5h1M1339 184.5h1M1339 233.5h1M1339 282.5h1M1339 330.5h1M1339 379.5h1M1339 428.5h1M1339 477.5h1M1339 525.5h1M1339 574.5h1M1339 623.5h1M1339 671.5h1M1339 720.5h1M1339 769.5h1M1339 818.5h1M1339 866.5h1M1339 915.5h1M1339 964.5h1M1388 184.5h1M1388 233.5h1M1388 282.5h1M1388 330.5h1M1388 379.5h1M1388 428.5h1M1388 477.5h1M1388 525.5h1M1388 574.5h1M1388 623.5h1M1388 671.5h1M1388 720.5h1M1388 769.5h1M1388 818.5h1M1388 866.5h1M1388 915.5h1M1388 964.5h1M1437 184.5h1M1437 233.5h1M1437 282.5h1M1437 330.5h1M1437 379.5h1M1437 428.5h1M1437 477.5h1M1437 525.5h1M1437 574.5h1M1437 623.5h1M1437 671.5h1M1437 720.5h1M1437 769.5h1M1437 818.5h1M1437 866.5h1M1437 915.5h1M1437 964.5h1M1485 184.5h1M1485 233.5h1M1485 282.5h1M1485 330.5h1M1485 379.5h1M1485 428.5h1M1485 477.5h1M1485 525.5h1M1485 574.5h1M1485 623.5h1M1485 671.5h1M1485 720.5h1M1485 769.5h1M1485 818.5h1M1485 866.5h1M1485 915.5h1M1485 964.5h1M1534 184.5h1M1534 233.5h1M1534 282.5h1M1534 330.5h1M1534 379.5h1M1534 428.5h1M1534 477.5h1M1534 525.5h1M1534 574.5h1M1534 623.5h1M1534 671.5h1M1534 720.5h1M1534 769.5h1M1534 818.5h1M1534 866.5h1M1534 915.5h1M1534 964.5h1M1583 184.5h1M1583 233.5h1M1583 282.5h1M1583 330.5h1M1583 428.5h1M1583 477.5h1M1583 525.5h1M1583 574.5h1M1583 623.5h1M1583 671.5h1M1583 720.5h1M1583 818.5h1M1583 866.5h1M1583 915.5h1M1583 964.5h1M1632 184.5h1M1632 233.5h1M1632 282.5h1M1632 330.5h1M1632 379.5h1M1632 428.5h1M1632 477.5h1M1632 525.5h1M1632 574.5h1M1632 623.5h1M1632 671.5h1M1632 720.5h1M1632 769.5h1M1632 818.5h1M1632 866.5h1M1632 915.5h1M1632 964.5h1M1680 184.5h1M1680 233.5h1M1680 282.5h1M1680 330.5h1M1680 379.5h1M1680 428.5h1M1680 477.5h1M1680 525.5h1M1680 574.5h1M1680 623.5h1M1680 671.5h1M1680 720.5h1M1680 769.5h1M1680 818.5h1M1680 866.5h1M1680 915.5h1M1680 964.5h1M1729 184.5h1M1729 233.5h1M1729 282.5h1M1729 330.5h1M1729 379.5h1M1729 428.5h1M1729 477.5h1M1729 525.5h1M1729 574.5h1M1729 623.5h1M1729 671.5h1M1729 720.5h1M1729 769.5h1M1729 818.5h1M1729 866.5h1M1729 915.5h1M1729 964.5h1M1778 184.5h1M1778 233.5h1M1778 282.5h1M1778 330.5h1M1778 379.5h1M1778 428.5h1M1778 477.5h1M1778 525.5h1M1778 574.5h1M1778 623.5h1M1778 671.5h1M1778 720.5h1M1778 769.5h1M1778 818.5h1M1778 866.5h1M1778 915.5h1M1778 964.5h1M1827 184.5h1M1827 233.5h1M1827 282.5h1M1827 330.5h1M1827 379.5h1M1827 428.5h1M1827 477.5h1M1827 525.5h1M1827 574.5h1M1827 623.5h1M1827 671.5h1M1827 720.5h1M1827 769.5h1M1827 818.5h1M1827 866.5h1M1827 915.5h1M1827 964.5h1" stroke="#8a8aa8" stroke-width="1" fill="none"/>
<path d="M22 379.5h3M23.5 378v3M22 769.5h3M23.5 768v3M412 379.5h3M413.5 378v3M412 769.5h3M413.5 768v3M802 379.5h3M803.5 378v3M802 769.5h3M803.5 768v3M1192 379.5h3M1193.5 378v3M1192 769.5h3M1193.5 768v3M1582 379.5h3M1583.5 378v3M1582 769.5h3M1583.5 768v3" stroke="#fff" stroke-width="1" fill="none"/>
<g fill="none" stroke-width="1.1" stroke-linecap="butt">
<path d="M303 257.5H426" stroke="#00cc66"/>
<path d="M364.5 257V345" stroke="#00cc66"/>
<path d="M364.5 365V403" stroke="#00cc66"/>
<ellipse cx="365" cy="428" rx="27" ry="25" stroke="#00cc66"/>
<path d="M357 416.5H373" stroke="#00cc66"/>
<path d="M364.5 408V424" stroke="#00cc66"/>
<path d="M357 440.5H373" stroke="#00cc66"/>
<path d="M364.5 453V491" stroke="#00cc66"/>
<path d="M364.5 511V574" stroke="#00cc66"/>
<path d="M340 574.5H390L364.5 598Z" stroke="#00cc66"/>
<path d="M716 623.5H827" stroke="#00cc66"/>
<path d="M584.5 633V671" stroke="#00cc66"/>
<ellipse cx="584.5" cy="696" rx="27" ry="25" stroke="#00cc66"/>
<path d="M576 684.5H592" stroke="#00cc66"/>
<path d="M584.5 676V692" stroke="#00cc66"/>
<path d="M576 708.5H592" stroke="#00cc66"/>
<path d="M584.5 721V759" stroke="#00cc66"/>
<path d="M584.5 779V808" stroke="#2f9bff"/>
<path d="M584.5 828V891" stroke="#00cc66"/>
<path d="M559 891.5H609L584.5 915Z" stroke="#00cc66"/>
<path d="M508 703.5H515.5V689.5H525.5V703.5H535.5V689.5H545.5V703.5H553" stroke="#00cc66"/>
<path d="M827.5 478L827.5 793L998 623.5Z" stroke="#00cc66"/>
<circle cx="1047.5" cy="623.5" r="49" stroke="#00cc66"/>
<path d="M1097 623.5H1354" stroke="#00cc66"/>
<path d="M1534.5 633V676" stroke="#00cc66"/>
<path d="M1510 676.5H1560" stroke="#00cc66"/>
<path d="M1510 702.5Q1534.5 680 1559 702.5" stroke="#00cc66"/>
<path d="M1534.5 691V759" stroke="#00cc66"/>
<path d="M1534.5 779V808" stroke="#2f9bff"/>
<path d="M1534.5 828V891" stroke="#00cc66"/>
<path d="M1510 891.5H1560L1534.5 916Z" stroke="#00cc66"/>
</g>
<path d="M594 623.5H696" stroke="#d04422" stroke-width="1"/><path d="M594 623.5H696" stroke="#2ec2ff" stroke-width="1" stroke-dasharray="2 4"/>
<path d="M1374 623.5H1525" stroke="#ff0000" stroke-width="1"/><path d="M1374 623.5H1525" stroke="#2ec2ff" stroke-width="1" stroke-dasharray="2 4"/>
<rect x="355" y="345" width="20" height="20" fill="#ff0000" stroke="none"/>
<rect x="355" y="491" width="20" height="20" fill="#ff0000" stroke="none"/>
<rect x="574" y="613" width="20" height="20" fill="#ff0000" stroke="none"/>
<rect x="696" y="613" width="20" height="20" fill="#ff0000" stroke="none"/>
<rect x="574" y="759" width="20" height="20" fill="#ff0000" stroke="none"/>
<rect x="574" y="808" width="20" height="20" fill="#ff0000" stroke="none"/>
<rect x="1354" y="613" width="20" height="20" fill="#ff0000" stroke="none"/>
<rect x="1525" y="613" width="20" height="20" fill="#ff0000" stroke="none"/>
<rect x="1525" y="759" width="20" height="20" fill="#ff0000" stroke="none"/>
<rect x="1525" y="808" width="20" height="20" fill="#ff0000" stroke="none"/>
<rect x="574.5" y="613.5" width="19" height="19" fill="none" stroke="#b4452c" stroke-width="1" stroke-dasharray="3 2"/>
<rect x="696.5" y="613.5" width="19" height="19" fill="none" stroke="#b4452c" stroke-width="1" stroke-dasharray="3 2"/>
<path d="M584 623.5H594M696 623.5H706" stroke="#c8452c" stroke-width="1" stroke-dasharray="2 2"/>
<g font-family="'DejaVu Sans Light','DejaVu Sans','Liberation Sans',sans-serif" font-weight="200">
<text x="388.238" y="307" font-size="23.5" fill="#ff0000" stroke="#ff0000" stroke-width="0.16" textLength="44.025" lengthAdjust="spacingAndGlyphs">vdd</text>
<text x="279.05" y="380" font-size="26" fill="#ffe4b5" stroke="#ffe4b5" stroke-width="0.16" textLength="58.9" lengthAdjust="spacingAndGlyphs">vdd!</text>
<text x="376.73" y="380" font-size="27" fill="#ff0000" stroke="#ff0000" stroke-width="0.00" textLength="35.16" lengthAdjust="spacingAndGlyphs">V0</text>
<path d="M396.5 380.5L409.5 359.5" stroke="#ff0000"/>
<text x="400.4" y="417" font-size="28" fill="#ff8a00" stroke="#ff8a00" stroke-width="0.00" textLength="93.2" lengthAdjust="spacingAndGlyphs">vdc=5</text>
<text x="275.05" y="501.5" font-size="26" fill="#ffe4b5" stroke="#ffe4b5" stroke-width="0.16" textLength="61.9" lengthAdjust="spacingAndGlyphs">gnd!</text>
<text x="388.738" y="551" font-size="23.5" fill="#ff0000" stroke="#ff0000" stroke-width="0.16" textLength="46.525" lengthAdjust="spacingAndGlyphs">gnd</text>
<text x="645.65" y="607" font-size="35" fill="#c24a2c" stroke="#000" stroke-width="0.25" textLength="19.7" lengthAdjust="spacingAndGlyphs">A</text>
<text x="696.65" y="590" font-size="35" fill="#ff0000" stroke="#000" stroke-width="0.25" textLength="20.7" lengthAdjust="spacingAndGlyphs">A</text>
<text x="552.73" y="648" font-size="27" fill="#ffe4b5" stroke="#ffe4b5" stroke-width="0.00" textLength="16.54" lengthAdjust="spacingAndGlyphs">A</text>
<text x="608.73" y="648" font-size="27" fill="#ff0000" stroke="#ff0000" stroke-width="0.00" textLength="29.97" lengthAdjust="spacingAndGlyphs">V1</text>
<text x="619.9" y="685" font-size="28" fill="#ff8a00" stroke="#ff8a00" stroke-width="0.00" textLength="59.7" lengthAdjust="spacingAndGlyphs">v1:0</text>
<path d="M663.5 685.5L677.5 664" stroke="#ff8a00"/>
<text x="619.9" y="721" font-size="28" fill="#ff8a00" stroke="#ff8a00" stroke-width="0.00" textLength="77.2" lengthAdjust="spacingAndGlyphs">v2=5</text>
<text x="619.9" y="757.5" font-size="28" fill="#ff8a00" stroke="#ff8a00" stroke-width="0.00" textLength="80.2" lengthAdjust="spacingAndGlyphs">tr=1n</text>
<text x="507.05" y="768" font-size="26" fill="#ffe4b5" stroke="#ffe4b5" stroke-width="0.16" textLength="59.9" lengthAdjust="spacingAndGlyphs">gnd!</text>
<text x="609.237" y="866.5" font-size="23.5" fill="#ff0000" stroke="#ff0000" stroke-width="0.16" textLength="45.525" lengthAdjust="spacingAndGlyphs">gnd</text>
<text x="823.375" y="624" font-size="35" fill="#ffffff" stroke="#000" stroke-width="0.25" textLength="151.75" lengthAdjust="spacingAndGlyphs">48u/24u</text>
<text x="1354.65" y="590" font-size="35" fill="#ff0000" stroke="#000" stroke-width="0.25" textLength="31.5" lengthAdjust="spacingAndGlyphs">Ai</text>
<text x="1444.65" y="607" font-size="35" fill="#ff0000" stroke="#000" stroke-width="0.25" textLength="31.5" lengthAdjust="spacingAndGlyphs">Ai</text>
<text x="1483.73" y="648" font-size="27" fill="#ffe4b5" stroke="#ffe4b5" stroke-width="0.00" textLength="25.2" lengthAdjust="spacingAndGlyphs">Ai</text>
<text x="1558.47" y="648" font-size="27" fill="#ff0000" stroke="#ff0000" stroke-width="0.00" textLength="39.05" lengthAdjust="spacingAndGlyphs">C0</text>
<path d="M1581.5 648.5L1595.5 627.5" stroke="#ff0000"/>
<text x="1571.9" y="685" font-size="28" fill="#ff8a00" stroke="#ff8a00" stroke-width="0.00" textLength="58.2" lengthAdjust="spacingAndGlyphs">c:1p</text>
<text x="1445.05" y="769" font-size="26" fill="#ffe4b5" stroke="#ffe4b5" stroke-width="0.16" textLength="61.9" lengthAdjust="spacingAndGlyphs">gnd!</text>
<text x="1559.24" y="867" font-size="23.5" fill="#ff0000" stroke="#ff0000" stroke-width="0.16" textLength="46.525" lengthAdjust="spacingAndGlyphs">gnd</text>
</g>
</svg>
<div class="abs" style="left:1860px;top:167px;width:6px;height:814px;background:#f0f0f0"></div>
<div class="abs" style="left:1866px;top:167px;width:16px;height:814px;background:#bcbcbc"></div>
<div class="abs" style="left:1867px;top:168px;width:14px;height:14px;background:linear-gradient(#e6e6e6,#cfcfcf);border-bottom:1.5px solid #555"></div>
<svg class="abs" style="left:1866px;top:167px" width="16" height="814" viewBox="0 0 16 814" fill="none"><path d="M4.6 11.6L8 5L11.4 11.6Z" stroke="#c2c2c2" fill="#d9d9d9" stroke-width="1"/><path d="M1.5 30V23.5Q1.5 17.5 8 17.5Q14.5 17.5 14.5 23.5V30" stroke="#d2d2d2" stroke-width="1.2"/><path d="M1.5 776V787M14.5 776V787" stroke="#a9a9a9" stroke-width="1"/><path d="M1.5 787V790Q1.5 797 8 797Q14.5 797 14.5 790V787" stroke="#666" stroke-width="1"/><path d="M1.5 30V780M14.5 30V780" stroke="#c1c1c1" stroke-width="1"/><path d="M5 403.5H11M5 405.5H11M5 407.5H11M5 409.5H11" stroke="#9a9a9a" stroke-width="1"/><path d="M5 404.5H11M5 406.5H11M5 408.5H11M5 410.5H11" stroke="#dcdcdc" stroke-width="1"/><rect x="1" y="799" width="14" height="15" fill="#dadada"/><path d="M1 813.2H15" stroke="#555" stroke-width="1.6"/><path d="M4.6 803.4L8 810L11.4 803.4Z" stroke="#bdbdbd" fill="#cfcfcf" stroke-width="1"/></svg>
<svg class="abs" style="left:1795px;top:28px" width="92" height="24" viewBox="1795 28 92 24"><rect x="1813.6" y="33" width="6.2" height="1.8" fill="#e0323c"/><text transform="scale(0.66 1)" x="2732.1 2747.0 2763.0 2780.6 2797.9 2814.5 2830.2" y="47.2" font-family="'Liberation Sans',sans-serif" font-weight="700" font-size="18.6" fill="#2e2e2e">cadence</text></svg>
</body></html>
